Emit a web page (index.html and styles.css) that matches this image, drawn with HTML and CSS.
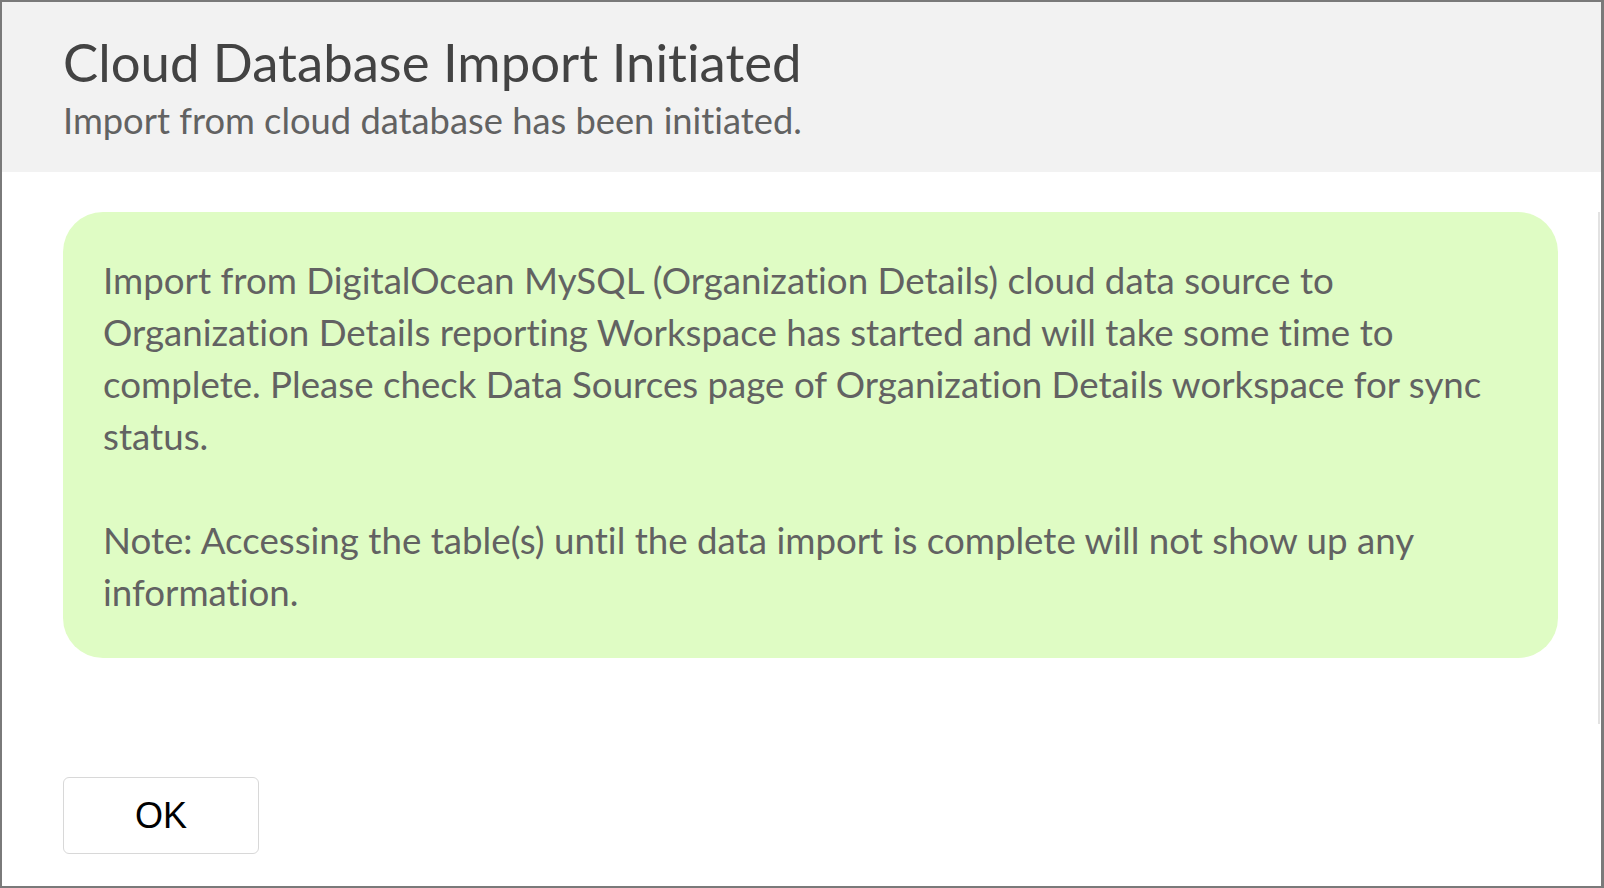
FILE: index.html
```html
<!DOCTYPE html>
<html>
<head>
<meta charset="utf-8">
<link rel="stylesheet" href="styles.css">
</head>
<body>
<div class="dialog">
  <div class="header">
    <h1 class="title">Cloud Database Import Initiated</h1>
    <p class="subtitle">Import from cloud database has been initiated.</p>
  </div>
  <div class="content">
    <div class="notice">Import from DigitalOcean MySQL (Organization Details) cloud data source to Organization Details reporting Workspace has started and will take some time to complete. Please check Data Sources page of Organization Details workspace for sync status.<br><br>Note: Accessing the table(s) until the data import is complete will not show up any information.</div>
    <div class="track"></div>
  </div>
  <div class="footer">
    <button class="ok-btn">OK</button>
  </div>
</div>
</body>
</html>
```
FILE: styles.css
```css
html, body {
  margin: 0;
  padding: 0;
  background: #ffffff;
}
.dialog {
  box-sizing: border-box;
  width: 1604px;
  height: 888px;
  border: 2px solid #7a7a7a;
  border-right-width: 3px;
  display: flex;
  flex-direction: column;
  font-family: Lato, "Open Sans", sans-serif;
  font-variant-ligatures: none;
  background: #ffffff;
}
.header {
  background: #f2f2f2;
  height: 170px;
  box-sizing: border-box;
  padding: 30px 61px 0;
}
.title {
  margin: 0;
  font-size: 52.7px;
  font-weight: 400;
  color: #434343;
  line-height: 60px;
}
.subtitle {
  margin: 6px 0 0;
  font-size: 36.3px;
  line-height: 44px;
  color: #626262;
}
.content {
  position: relative;
  padding: 40px 43px 0 61px;
}
.notice {
  background: #dffcc4;
  border-radius: 40px;
  padding: 42px 40px 40px 40px;
  font-size: 36.7px;
  line-height: 52px;
  color: #626262;
}
.track {
  position: absolute;
  right: 1px;
  top: 40px;
  width: 2px;
  height: 512px;
  background: #e2e2e2;
}
.footer {
  margin-top: auto;
  padding: 0 0 32px 61px;
}
.ok-btn {
  width: 196px;
  height: 77px;
  border: 1px solid #d8d8d8;
  border-radius: 6px;
  background: #ffffff;
  font-family: "Liberation Sans", Arial, sans-serif;
  font-size: 36px;
  color: #000000;
  padding: 0;
}
```
